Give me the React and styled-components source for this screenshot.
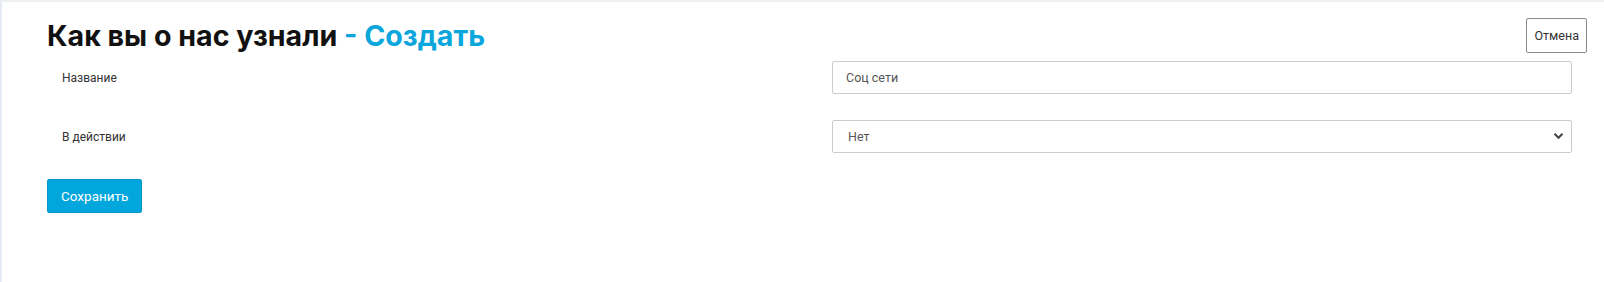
import React from "react";
import styled, { createGlobalStyle } from "styled-components";

const Global = createGlobalStyle`
  html, body { margin: 0; padding: 0; background: #fff; }
  body { font-family: Roboto, "Liberation Sans", sans-serif; color: #333; }
  * { box-sizing: border-box; }
`;

const Page = styled.div`
  min-height: 282px;
  border-top: 2px solid #eef0f3;
  border-left: 2px solid #e6ebf4;
  padding: 15px 17px 0 45px;
`;

const Header = styled.div`
  display: flex;
  justify-content: space-between;
  align-items: center;
  height: 37px;
`;

const Title = styled.h1`
  margin: 0;
  font-family: Inter, Roboto, sans-serif;
  font-weight: 700;
  font-size: 28.6px;
  color: #111;
  letter-spacing: 0;
`;

const Accent = styled.span`
  color: #0aa6dc;
`;

const OutlineButton = styled.button`
  height: 35px;
  padding: 0 7px;
  background: #fff;
  border: 1px solid #8a8a8a;
  border-radius: 2px;
  font-family: Roboto, sans-serif;
  font-size: 12.5px;
  color: #333;
`;

const Form = styled.div`
  display: flex;
  flex-direction: column;
  gap: 26px;
  margin-top: 7px;
`;

const Row = styled.div`
  display: grid;
  grid-template-columns: 1fr 1fr;
  align-items: center;
`;

const Label = styled.label`
  padding: 0 15px;
  font-size: 12px;
  color: #333;
`;

const Field = styled.div`
  padding: 0 15px;
  position: relative;
`;

const Input = styled.input`
  width: 100%;
  height: 33px;
  border: 1px solid #ccc;
  border-radius: 2px;
  padding: 0 13px;
  font-family: Roboto, sans-serif;
  font-size: 12.5px;
  color: #555;
  background: #fff;
  outline: none;
`;

const Select = styled.select`
  width: 100%;
  height: 33px;
  border: 1px solid #ccc;
  border-radius: 2px;
  padding: 0 15px;
  font-family: Roboto, sans-serif;
  font-size: 12.5px;
  color: #555;
  background: #fff;
  appearance: none;
  outline: none;
`;

const Chevron = styled.svg`
  position: absolute;
  right: 23px;
  top: 12px;
  pointer-events: none;
`;

const PrimaryButton = styled.button`
  align-self: flex-start;
  height: 34px;
  padding: 0 13px;
  background: #00a6dc;
  border: 1px solid #0a97c8;
  border-radius: 2px;
  color: #fff;
  font-family: Roboto, sans-serif;
  font-size: 13.5px;
`;

export default function App() {
  return (
    <>
      <Global />
      <Page>
        <Header>
          <Title>
            Как вы о нас узнали <Accent>- Создать</Accent>
          </Title>
          <OutlineButton>Отмена</OutlineButton>
        </Header>
        <Form>
          <Row>
            <Label>Название</Label>
            <Field>
              <Input defaultValue="Соц сети" />
            </Field>
          </Row>
          <Row>
            <Label>В действии</Label>
            <Field>
              <Select defaultValue="no">
                <option value="no">Нет</option>
                <option value="yes">Да</option>
              </Select>
              <Chevron width="11" height="8" viewBox="0 0 11 8">
                <path d="M1.5 1.8 L5.5 5.8 L9.5 1.8" fill="none" stroke="#444" strokeWidth="2" />
              </Chevron>
            </Field>
          </Row>
          <PrimaryButton>Сохранить</PrimaryButton>
        </Form>
      </Page>
    </>
  );
}
